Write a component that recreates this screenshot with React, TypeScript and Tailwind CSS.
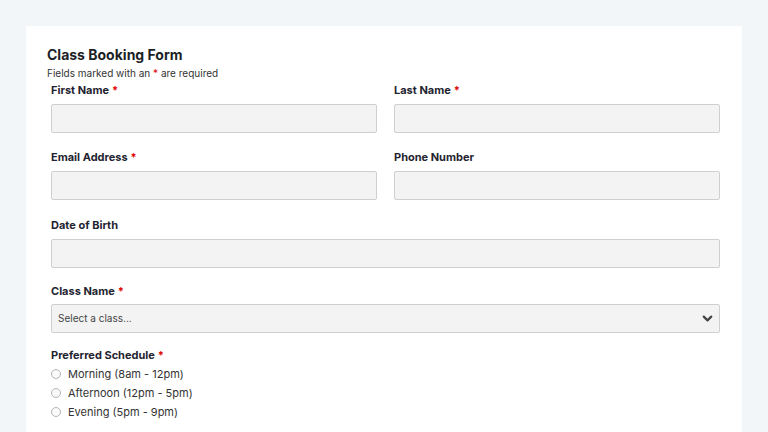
import { ChevronDown } from "lucide-react";

function Label({ text, required }: { text: string; required?: boolean }) {
  return (
    <label className="block text-[11px] font-bold text-[#1f2430] leading-[14px] h-[14px]">
      {text}
      {required && <span className="text-[#e00000] ml-[3px]">*</span>}
    </label>
  );
}

function Input() {
  return <div className="h-[29px] bg-[#f3f3f3] border border-[#cfcfcf] rounded-[2px]" />;
}

export default function App() {
  return (
    <div className="min-h-screen bg-[#f3f6f9] pt-[26px] px-[26px] [font-family:Inter,sans-serif]">
      <div className="w-[716px] bg-white pl-[21px] pr-[21px] pt-[20px] pb-6">
        <h1 className="text-[14px] font-bold text-[#1c1f26] leading-[18px]">Class Booking Form</h1>
        <p className="text-[10px] text-[#333] leading-[13px] mt-[3px]">
          Fields marked with an <span className="text-[#e00000]">*</span> are required
        </p>
        <div className="pl-[4px] pr-[1px]">
          <div className="grid grid-cols-2 gap-x-[17px] mt-[3px]">
            <div>
              <Label text="First Name" required />
              <div className="mt-[7px]"><Input /></div>
            </div>
            <div>
              <Label text="Last Name" required />
              <div className="mt-[7px]"><Input /></div>
            </div>
          </div>
          <div className="grid grid-cols-2 gap-x-[17px] mt-[17px]">
            <div>
              <Label text="Email Address" required />
              <div className="mt-[7px]"><Input /></div>
            </div>
            <div>
              <Label text="Phone Number" />
              <div className="mt-[7px]"><Input /></div>
            </div>
          </div>
          <div className="mt-[18px]">
            <Label text="Date of Birth" />
            <div className="mt-[7px]"><Input /></div>
          </div>
          <div className="mt-[16px]">
            <Label text="Class Name" required />
            <div className="mt-[6px] h-[29px] bg-[#f3f3f3] border border-[#cfcfcf] rounded-[2px] flex items-center justify-between pl-[6px] pr-[4px]">
              <span className="text-[10px] text-[#444]">Select a class...</span>
              <ChevronDown className="w-[15px] h-[15px] text-[#444]" strokeWidth={3.5} />
            </div>
          </div>
          <div className="mt-[15px]">
            <Label text="Preferred Schedule" required />
            <div className="mt-[5px] flex flex-col gap-[5px]">
              {["Morning (8am - 12pm)", "Afternoon (12pm - 5pm)", "Evening (5pm - 9pm)"].map((t) => (
                <div key={t} className="flex items-center gap-[7px] h-[14px]">
                  <span className="w-[10px] h-[10px] rounded-full border border-[#b5b5b5] bg-[#fafafa]" />
                  <span className="text-[11px] text-[#333]">{t}</span>
                </div>
              ))}
            </div>
          </div>
        </div>
      </div>
    </div>
  );
}
